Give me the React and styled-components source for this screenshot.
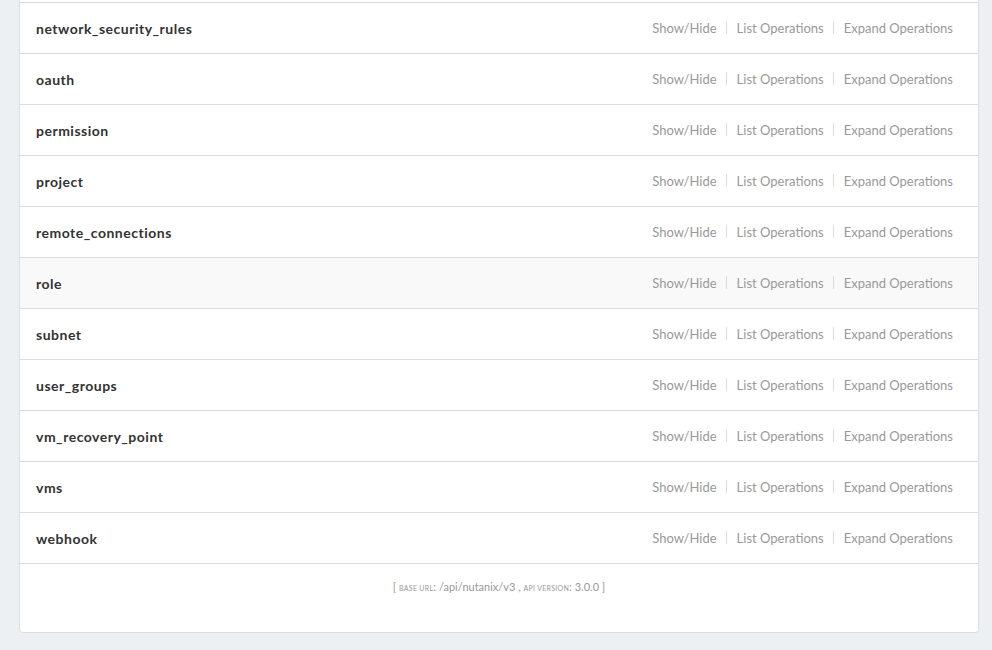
import styled, { createGlobalStyle } from 'styled-components';

const GlobalStyle = createGlobalStyle`
	html, body {
		margin: 0;
		padding: 0;
		background: #edf0f2;
		font-family: Lato, "Open Sans", sans-serif;
	}
`;

const resources = [
	'network_security_rules',
	'oauth',
	'permission',
	'project',
	'remote_connections',
	'role',
	'subnet',
	'user_groups',
	'vm_recovery_point',
	'vms',
	'webhook',
];

const Page = styled.div`
	padding: 0 13px 17px 19px;
`;

const Card = styled.div`
	background: #fff;
	border: 1px solid #dcdfe2;
	border-top: none;
	border-radius: 0 0 4px 4px;
	padding-top: 2px;
`;

const Resource = styled.div`
	display: flex;
	align-items: center;
	justify-content: space-between;
	height: 50px;
	padding: 0 25px 0 16px;
	border-top: 1px solid #dcdcdc;
	background: ${({ $active }) => ($active ? '#f9f9f9' : '#fff')};
`;

const Name = styled.h2`
	margin: 0;
	padding-top: 1px;
	font-size: 14px;
	font-weight: 700;
	color: #333;
	letter-spacing: 0.5px;
`;

const Options = styled.ul`
	display: flex;
	align-items: center;
	margin: 0;
	padding: 0 0 1px;
	list-style: none;
	font-size: 13px;
	color: #999;
`;

const Option = styled.li`
	display: flex;
	align-items: center;

	& + &::before {
		content: '';
		display: block;
		width: 1px;
		height: 13px;
		background: #dcdcdc;
		margin: 0 10px 0 9px;
	}
`;

const Footer = styled.div`
	border-top: 1px solid #dcdcdc;
	height: 69px;
	padding-top: 16px;
	box-sizing: border-box;
	text-align: center;
	font-size: 11px;
	color: #999;
`;

const Label = styled.span`
	text-transform: uppercase;
	font-size: 7px;
	letter-spacing: 0.3px;
`;

export default function App() {
	return (
		<Page>
			<GlobalStyle />
			<Card>
				{resources.map((name) => (
					<Resource key={name} $active={name === 'role'}>
						<Name>{name}</Name>
						<Options>
							<Option>Show/Hide</Option>
							<Option>List Operations</Option>
							<Option>Expand Operations</Option>
						</Options>
					</Resource>
				))}
				<Footer>
					[ <Label>base url</Label>: /api/nutanix/v3 , <Label>api version</Label>: 3.0.0 ]
				</Footer>
			</Card>
		</Page>
	);
}
